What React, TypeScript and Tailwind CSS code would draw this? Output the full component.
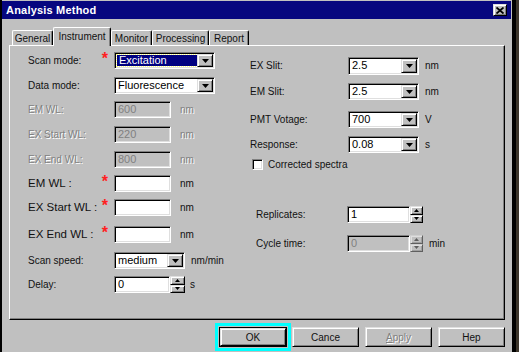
import React from "react";

const sunk =
  "border border-t-[#808080] border-l-[#808080] border-b-white border-r-white shadow-[inset_1px_1px_0_#000,inset_-1px_-1px_0_#dfdfdf]";
const raised =
  "border border-t-[#dfdfdf] border-l-[#dfdfdf] border-b-black border-r-black shadow-[inset_1px_1px_0_#fff,inset_-1px_-1px_0_#808080]";
const dim = "text-[#808080] [text-shadow:1px_1px_0_#fff]";

function Arrow({ up }: { up?: boolean }) {
  return (
    <svg width="7" height="4" viewBox="0 0 7 4">
      <polygon points={up ? "0,4 7,4 3.5,0" : "0,0 7,0 3.5,4"} fill="#000" />
    </svg>
  );
}

function Combo({ cls, value, active }: { cls: string; value: string; active?: boolean }) {
  return (
    <div className={`${cls} ${sunk} bg-white flex items-stretch text-[11px] text-black`}>
      <div className="flex-1 flex items-center pl-[2px] py-[2px] min-w-0">
        {active ? (
          <span className="bg-[#000080] text-white w-full h-full flex items-center pl-[2px] outline-1 outline-dotted outline-[#ffff80]">
            {value}
          </span>
        ) : (
          <span className="pl-[1px]">{value}</span>
        )}
      </div>
      <div className={`w-[16px] my-[1px] mr-[1px] bg-[#c0c0c0] flex items-center justify-center ${raised}`}>
        <Arrow />
      </div>
    </div>
  );
}

function Field({ cls, value = "", disabled }: { cls: string; value?: string; disabled?: boolean }) {
  return (
    <div
      className={`${cls} ${sunk} flex items-center pl-[3px] text-[11px] ${
        disabled ? "bg-[#c0c0c0] text-[#808080]" : "bg-white text-black"
      }`}
    >
      {value}
    </div>
  );
}

function Spin({ cls, disabled }: { cls: string; disabled?: boolean }) {
  return (
    <div className={`${cls} flex flex-col ${disabled ? "opacity-50" : ""}`}>
      <div className={`flex-1 bg-[#c0c0c0] flex items-center justify-center ${raised}`}>
        <svg width="5" height="3" viewBox="0 0 5 3">
          <polygon points="0,3 5,3 2.5,0" fill="#000" />
        </svg>
      </div>
      <div className={`flex-1 bg-[#c0c0c0] flex items-center justify-center ${raised}`}>
        <svg width="5" height="3" viewBox="0 0 5 3">
          <polygon points="0,0 5,0 2.5,3" fill="#000" />
        </svg>
      </div>
    </div>
  );
}

function LRow({
  cls,
  label,
  big,
  star,
  disabled,
  children,
}: {
  cls: string;
  label: string;
  big?: boolean;
  star?: boolean;
  disabled?: boolean;
  children: React.ReactNode;
}) {
  return (
    <div className={`flex items-center h-[17px] ${cls}`}>
      <div className="w-[86px] flex items-center justify-between pr-[6px]">
        <span
          className={`${big ? "text-[11.5px]" : "text-[10px]"} ${disabled ? dim : "text-[#111]"} whitespace-nowrap`}
        >
          {label}
        </span>
        {star && <span className="text-[#ff2020] text-[16px] font-bold leading-none -mt-[3px]">*</span>}
      </div>
      {children}
    </div>
  );
}

function Unit({ cls, text, disabled }: { cls: string; text: string; disabled?: boolean }) {
  return <span className={`${cls} text-[10px] ${disabled ? dim : "text-[#111]"}`}>{text}</span>;
}

function RRow({ cls, label, children }: { cls: string; label: string; children: React.ReactNode }) {
  return (
    <div className={`flex items-center h-[17px] ${cls}`}>
      <span className="w-[98px] text-[10px] text-[#111]">{label}</span>
      {children}
    </div>
  );
}

export default function App() {
  const tabs = "h-[15px] bg-[#c0c0c0] border-t border-l border-t-white border-l-white border-r border-r-black shadow-[inset_-1px_0_0_#808080] rounded-t-[2px] flex items-center justify-center text-[10px] text-[#111]";
  return (
    <div className="w-[519px] h-[352px] bg-[#c0c0c0] flex overflow-hidden font-['Liberation_Sans',Arial,sans-serif]">
      <div className="w-[2px] bg-black" />
      <div className="w-[509px] flex flex-col">
        {/* title bar */}
        <div className="mt-[1px] h-[18px] bg-[#06067f] flex items-center justify-between pl-[4px] pr-[4px]">
          <span className="text-white text-[11px] font-bold tracking-[0.2px]">Analysis Method</span>
          <div className={`w-[14px] h-[12px] bg-[#c0c0c0] flex items-center justify-center ${raised}`}>
            <svg width="8" height="7" viewBox="0 0 8 7">
              <path d="M0.5 0.5 L7.5 6.5 M7.5 0.5 L0.5 6.5" stroke="#000" strokeWidth="1.8" />
            </svg>
          </div>
        </div>

        {/* tabs */}
        <div className="mt-[8px] h-[18px] ml-[10px] flex items-end">
          <div className={`${tabs} w-[41px]`}>General</div>
          <div className="relative z-10 -mb-[1px] h-[19px] w-[58px] bg-[#c0c0c0] border-t border-l border-t-white border-l-white border-r border-r-black shadow-[inset_-1px_0_0_#808080] rounded-t-[2px] flex items-center justify-center text-[10px] text-[#111] pb-[2px]">
            Instrument
          </div>
          <div className={`${tabs} w-[41px]`}>Monitor</div>
          <div className={`${tabs} w-[57px]`}>Processing</div>
          <div className={`${tabs} w-[40px]`}>Report</div>
        </div>

        {/* panel */}
        <div className="ml-[7px] w-[496px] h-[275px] border-t border-l border-t-white border-l-white border-r border-b border-r-black border-b-black shadow-[inset_-1px_-1px_0_#808080] flex">
          <div className="w-[222px] pl-[18px] flex flex-col">
            <LRow cls="mt-[6px]" label="Scan mode:" star>
              <Combo cls="w-[101px] h-[17px]" value="Excitation" active />
            </LRow>
            <LRow cls="mt-[8px]" label="Data mode:">
              <Combo cls="w-[101px] h-[17px]" value="Fluorescence" />
            </LRow>
            <LRow cls="mt-[7px]" label="EM WL:" disabled>
              <Field cls="w-[57px] h-[17px]" value="600" disabled />
              <Unit cls="ml-[9px]" text="nm" disabled />
            </LRow>
            <LRow cls="mt-[8px]" label="EX Start WL:" disabled>
              <Field cls="w-[57px] h-[17px]" value="220" disabled />
              <Unit cls="ml-[9px]" text="nm" disabled />
            </LRow>
            <LRow cls="mt-[8px]" label="EX End WL:" disabled>
              <Field cls="w-[57px] h-[17px]" value="800" disabled />
              <Unit cls="ml-[9px]" text="nm" disabled />
            </LRow>
            <LRow cls="mt-[7px]" label="EM WL :" big star>
              <Field cls="w-[57px] h-[17px]" />
              <Unit cls="ml-[9px]" text="nm" />
            </LRow>
            <LRow cls="mt-[7px]" label="EX Start WL :" big star>
              <Field cls="w-[57px] h-[17px]" />
              <Unit cls="ml-[9px]" text="nm" />
            </LRow>
            <LRow cls="mt-[10px]" label="EX End WL :" big star>
              <Field cls="w-[57px] h-[17px]" />
              <Unit cls="ml-[9px]" text="nm" />
            </LRow>
            <LRow cls="mt-[9px]" label="Scan speed:">
              <Combo cls="w-[71px] h-[17px]" value="medium" />
              <Unit cls="ml-[6px]" text="nm/min" />
            </LRow>
            <LRow cls="mt-[7px]" label="Delay:">
              <Field cls="w-[56px] h-[17px]" value="0" />
              <Spin cls="w-[15px] h-[17px]" />
              <Unit cls="ml-[5px]" text="s" />
            </LRow>
          </div>

          <div className="flex-1 pl-[18px] flex flex-col">
            <RRow cls="mt-[11px]" label="EX Slit:">
              <Combo cls="w-[71px] h-[18px]" value="2.5" />
              <Unit cls="ml-[6px]" text="nm" />
            </RRow>
            <RRow cls="mt-[9px]" label="EM Slit:">
              <Combo cls="w-[71px] h-[17px]" value="2.5" />
              <Unit cls="ml-[6px]" text="nm" />
            </RRow>
            <RRow cls="mt-[11px]" label="PMT Votage:">
              <Combo cls="w-[71px] h-[17px]" value="700" />
              <Unit cls="ml-[6px]" text="V" />
            </RRow>
            <RRow cls="mt-[8px]" label="Response:">
              <Combo cls="w-[71px] h-[17px]" value="0.08" />
              <Unit cls="ml-[6px]" text="s" />
            </RRow>
            <div className="mt-[5px] h-[13px] flex items-center">
              <div className={`ml-[2px] w-[11px] h-[11px] bg-white ${sunk}`} />
              <span className="ml-[5px] text-[10px] text-[#111]">Corrected spectra</span>
            </div>
            <div className="mt-[35px] h-[17px] flex items-center">
              <span className="ml-[6px] w-[91px] text-[10px] text-[#111]">Replicates:</span>
              <Field cls="w-[63px] h-[17px]" value="1" />
              <Spin cls="w-[13px] h-[17px]" />
            </div>
            <div className="mt-[12px] h-[17px] flex items-center">
              <span className="ml-[6px] w-[91px] text-[10px] text-[#111]">Cycle time:</span>
              <Field cls="w-[63px] h-[17px]" value="0" disabled />
              <Spin cls="w-[13px] h-[17px]" disabled />
              <Unit cls="ml-[6px]" text="min" />
            </div>
          </div>
        </div>

        {/* buttons */}
        <div className="mt-[3px] flex items-start pl-[213px]">
          <div className="w-[76px] h-[28px] border-[3px] border-[#00ffff] p-[1px]">
            <div className="w-full h-full border border-black">
              <div className={`w-full h-full bg-[#c0c0c0] flex items-center justify-center text-[10px] text-[#111] ${raised}`}>
                OK
              </div>
            </div>
          </div>
          <div className={`ml-[1px] mt-[4px] w-[67px] h-[20px] bg-[#c0c0c0] flex items-center justify-center text-[10px] text-[#111] ${raised}`}>
            Cance
          </div>
          <div className={`ml-[6px] mt-[4px] w-[67px] h-[20px] bg-[#c0c0c0] flex items-center justify-center text-[10px] ${dim} ${raised}`}>
            <span>
              <span className="underline">A</span>pply
            </span>
          </div>
          <div className={`ml-[6px] mt-[4px] w-[67px] h-[20px] bg-[#c0c0c0] flex items-center justify-center text-[10px] text-[#111] ${raised}`}>
            Hep
          </div>
        </div>
      </div>
      <div className="w-[1px]" />
      <div className="w-[4px] bg-black" />
      <div className="w-[3px] bg-[#3b342a]" />
    </div>
  );
}
